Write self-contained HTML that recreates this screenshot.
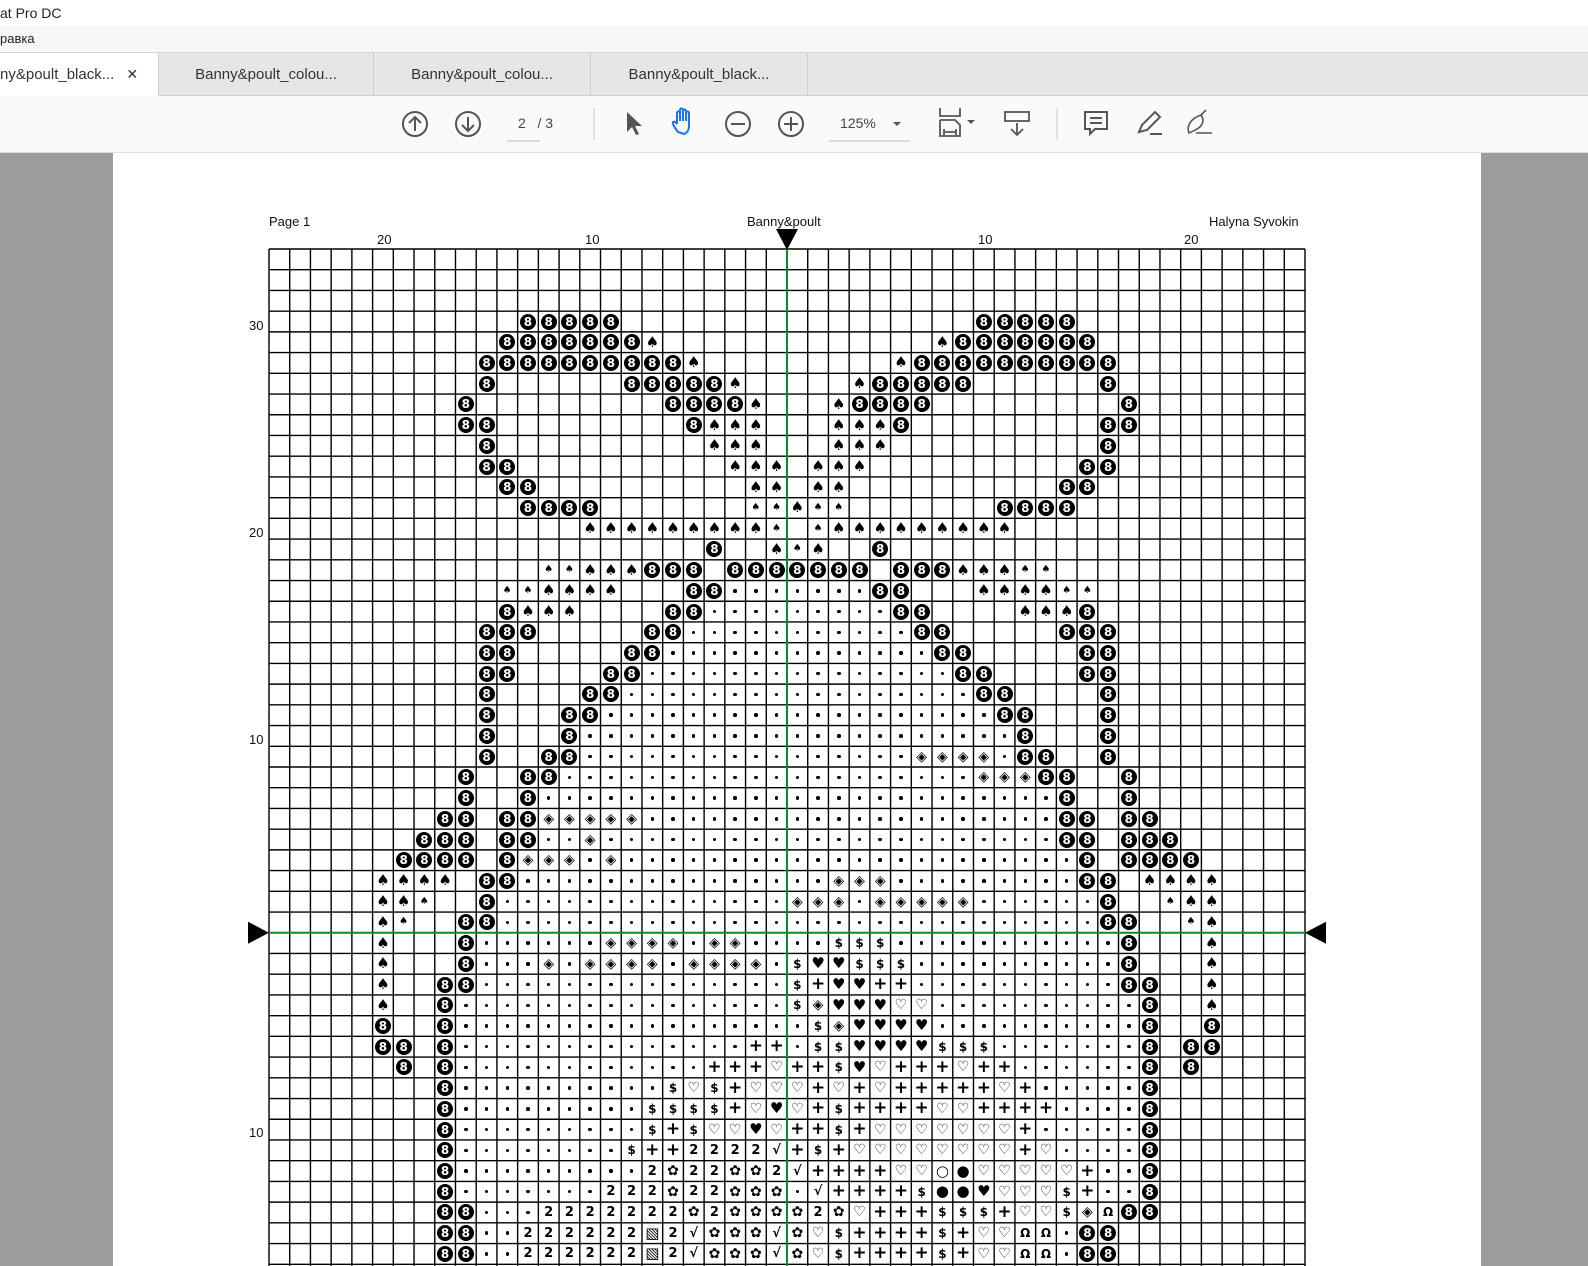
<!DOCTYPE html>
<html><head><meta charset="utf-8">
<style>
*{margin:0;padding:0;box-sizing:border-box}
body{width:1588px;height:1266px;overflow:hidden;background:#9c9c9c;font-family:"Liberation Sans",sans-serif;position:relative}
.abs{position:absolute}
#title{left:0;top:0;width:1588px;height:27px;background:#fff;font-size:14px;color:#222;padding:5px 0 0 0}
#menu{left:0;top:27px;width:1588px;height:25px;background:#f7f7f7;font-size:13px;color:#222;padding:4px 0 0 0}
#tabs{left:0;top:52px;width:1588px;height:44px;background:#e6e6e6;border-top:1px solid #d4d4d4;border-bottom:1px solid #d0d0d0}
.tab{position:absolute;top:0;height:43px;font-size:15px;color:#333;line-height:43px;border-right:1px solid #cfcfcf;text-align:center}
#tool{left:0;top:96px;width:1588px;height:57px;background:#fafafa;border-bottom:1px solid #ddd}
#page{left:113px;top:153px;width:1368px;height:1113px;background:#fff}
.c{position:absolute;width:20.7px;height:20.7px;display:flex;align-items:center;justify-content:center;color:#000;font-weight:bold;line-height:1}
.e{width:16px;height:16px;border-radius:50%;background:#000;color:#fff;font-size:12px;font-weight:bold;display:flex;align-items:center;justify-content:center;font-family:"DejaVu Sans",sans-serif}
.dt{width:3.5px;height:3.5px;background:#000;border-radius:50%}
.lbl{position:absolute;font-size:13px;color:#111}
</style></head><body>
<div id="title" class="abs">at Pro DC</div>
<div id="menu" class="abs">равка</div>
<div id="tabs" class="abs">
 <div class="tab" style="left:0;width:159px;background:#fff;text-align:left;padding-left:0">ny&amp;poult_black... <span style="margin-left:8px;font-size:14px">✕</span></div>
 <div class="tab" style="left:159px;width:215px">Banny&amp;poult_colou...</div>
 <div class="tab" style="left:374px;width:217px">Banny&amp;poult_colou...</div>
 <div class="tab" style="left:591px;width:217px">Banny&amp;poult_black...</div>
</div>
<div id="tool" class="abs">
<svg width="1588" height="57" style="position:absolute;left:0;top:0" fill="none" stroke="#555" stroke-width="2">
 <circle cx="415" cy="28" r="12"/><path d="M415 35V21M409 27l6-6 6 6"/>
 <circle cx="468" cy="28" r="12"/><path d="M468 21v14M462 29l6 6 6-6"/>
 <line x1="507" y1="45" x2="540" y2="45" stroke="#bbb" stroke-width="1"/>
 <line x1="594" y1="12" x2="594" y2="44" stroke="#ccc" stroke-width="1"/>
 <path d="M627 16l0 20 5-5 4 8 3-1-4-8 7 0z" fill="#555" stroke="none"/>
 <path d="M678 36c-3-4-6-8-5-10 1-1 3 0 4 2V17c0-2 3-2 3 0v8-11c0-2 3-2 3 0v11-10c0-2 3-2 3 0v10-8c0-2 3-2 3 0v13c0 4-2 7-5 8z" stroke="#1a73e8"/>
 <circle cx="738" cy="28" r="12"/><path d="M731 28h14"/>
 <circle cx="791" cy="28" r="12"/><path d="M784 28h14M791 21v14"/>
 <line x1="829" y1="45" x2="910" y2="45" stroke="#bbb" stroke-width="1"/>
 <path d="M893 26h8l-4 4z" fill="#555" stroke="none"/>
 <path d="M940 12v8h20v-8M940 24v16h20V29l-5-5h-15M944 36h12M944 33v6M956 33v6" stroke-width="1.8"/>
 <path d="M967 24h8l-4 4z" fill="#555" stroke="none"/>
 <rect x="1005" y="16" width="24" height="9" stroke-width="1.8"/><path d="M1017 27v12M1011 33l6 6 6-6" stroke-width="1.8"/>
 <line x1="1057" y1="12" x2="1057" y2="44" stroke="#ccc" stroke-width="1"/>
 <path d="M1085 16h22v17h-12l-5 5v-5h-5z M1090 22h12M1090 27h12"/>
 <path d="M1139 36l3-7 13-13 5 5-13 13zM1150 38h12" />
 <path d="M1189 37c-3-8 3-15 12-18 3 4 3 10-4 14-3 2-6 3-8 4zM1201 19l5-5M1196 37h16" stroke-width="1.6"/>
</svg>
<div class="abs" style="left:518px;top:19px;font-size:14px;color:#444">2 &nbsp; / 3</div>
<div class="abs" style="left:840px;top:19px;font-size:14px;color:#444">125%</div>
</div>
<div id="page" class="abs"></div>
<div class="lbl" style="left:269px;top:214px">Page 1</div>
<div class="lbl" style="left:747px;top:214px">Banny&amp;poult</div>
<div class="lbl" style="left:1209px;top:214px">Halyna Syvokin</div>
<div class="lbl" style="left:377px;top:232px">20</div>
<div class="lbl" style="left:585px;top:232px">10</div>
<div class="lbl" style="left:978px;top:232px">10</div>
<div class="lbl" style="left:1184px;top:232px">20</div>
<div class="lbl" style="left:249px;top:318px">30</div>
<div class="lbl" style="left:249px;top:525px">20</div>
<div class="lbl" style="left:249px;top:732px">10</div>
<div class="lbl" style="left:249px;top:1125px">10</div>
<svg id="g" class="abs" style="left:0;top:0" width="1588" height="1266"></svg>
<div id="cells"></div>
<script>
const X0=269,Y0=249,S=20.72,NC=50,NR=49;
let s='';
for(let i=0;i<=NC;i++){const x=X0+i*S;s+=`<line x1="${x}" y1="${Y0}" x2="${x}" y2="1266" stroke="#000" stroke-width="1.4"/>`}
for(let j=0;j<=NR;j++){const y=Y0+j*S;if(y>1266)break;s+=`<line x1="${X0}" y1="${y}" x2="${X0+NC*S}" y2="${y}" stroke="#000" stroke-width="1.4"/>`}
const cx=X0+25*S,cy=Y0+33*S;
s+=`<line x1="${cx}" y1="${Y0}" x2="${cx}" y2="1266" stroke="#0b8a2c" stroke-width="2"/>`;
s+=`<line x1="${X0}" y1="${cy}" x2="${X0+NC*S}" y2="${cy}" stroke="#0b8a2c" stroke-width="2"/>`;
s+=`<path d="M${cx-11} 229h22l-11 21z"/><path d="M248 ${cy-11}v22l21-11z"/><path d="M1326 ${cy-11}v22l-21-11z"/>`;
document.getElementById('g').innerHTML=s;
const D=n=>'.'.repeat(n);
const rows={
3:[[12,"88888"],[34,"88888"]],
4:[[11,"8888888S"],[32,"S8888888"]],
5:[[10,"8888888888S"],[30,"S8888888888"]],
6:[[10,"8"],[17,"88888S"],[28,"S88888"],[40,"8"]],
7:[[9,"8"],[19,"8888S"],[27,"S8888"],[41,"8"]],
8:[[9,"88"],[20,"8SSS"],[27,"SSS8"],[40,"88"]],
9:[[10,"8"],[21,"SSS"],[27,"SSS"],[40,"8"]],
10:[[10,"88"],[22,"SSS"],[26,"SSS"],[39,"88"]],
11:[[11,"88"],[23,"SS"],[26,"SS"],[38,"88"]],
12:[[12,"8888"],[23,"ddSdd"],[35,"8888"]],
13:[[15,"SSSSSSSSSd d"],[27,"SSSSSSSSS"]],
14:[[21,"8"],[24,"SdS"],[29,"8"]],
15:[[13,"ddSSS888 8888888 888SSSdd"]],
16:[[11,"ddSSSS"],[20,"88"+D(7)+"88"],[34,"SSSSdd"]],
17:[[11,"8SSS"],[19,"88"+D(9)+"88"],[36,"SSS8"]],
18:[[10,"888"],[18,"88"+D(11)+"88"],[38,"888"]],
19:[[10,"88"],[17,"88"+D(13)+"88"],[39,"88"]],
20:[[10,"88"],[16,"88"+D(15)+"88"],[39,"88"]],
21:[[10,"8"],[15,"88"+D(17)+"88"],[40,"8"]],
22:[[10,"8"],[14,"88"+D(19)+"88"],[40,"8"]],
23:[[10,"8"],[14,"8"+D(21)+"8"],[40,"8"]],
24:[[10,"8"],[13,"88"+D(16)+"oooo.88"],[40,"8"]],
25:[[9,"8"],[12,"88"+D(20)+"ooo88"],[41,"8"]],
26:[[9,"8"],[12,"8"+D(25)+"8"],[41,"8"]],
27:[[8,"88"],[11,"88ooooo"+D(20)+"88"],[41,"88"]],
28:[[7,"888"],[11,"88..o"+D(22)+"88"],[41,"888"]],
29:[[6,"8888"],[11,"8ooo.o"+D(22)+"8"],[41,"8888"]],
30:[[5,"SSSS"],[10,"88"+D(15)+"ooo"+D(9)+"88"],[42,"SSSS"]],
31:[[5,"SSd"],[10,"8"+D(14)+"ooo.ooooo"+D(6)+"8"],[43,"dSS"]],
32:[[5,"Sd"],[9,"88"+D(29)+"88"],[44,"dS"]],
33:[[5,"S"],[9,"8"+D(6)+"oooo.oo"+D(4)+"$$$"+D(11)+"8"],[45,"S"]],
34:[[5,"S"],[9,"8..."+"o.oooo.oooo."+"$hh$$$"+D(10)+"8"],[45,"S"]],
35:[[5,"S"],[8,"88"+D(15)+"$+hh++"+D(10)+"88"],[45,"S"]],
36:[[5,"S"],[8,"8"+D(16)+"$ohhhHH"+D(10)+"8"],[45,"S"]],
37:[[5,"8"],[8,"8"+D(17)+"$ohhhh"+D(10)+"8"],[45,"8"]],
38:[[5,"88"],[8,"8"+D(14)+"++."+"$$hhhh$$$"+D(7)+"8"],[44,"88"]],
39:[[6,"8"],[8,"8"+D(12)+"+++H++$hH+++H++"+D(6)+"8"],[44,"8"]],
40:[[8,"8"+D(10)+"$H$+HHH+H+H+++++H+"+D(5)+"8"]],
41:[[8,"8"+D(9)+"$$$$+HhH+$++++HH++++"+D(4)+"8"]],
42:[[8,"8"+D(9)+"$+$HHhH++$+HHHHHHH+"+D(5)+"8"]],
43:[[8,"8"+D(8)+"$++2222v+$+HHHHHHHH+H"+D(4)+"8"]],
44:[[8,"8"+D(9)+"2f22ff2v++++HHOBHHHHH+"+D(2)+"8"]],
45:[[8,"8"+D(7)+"222f22fff.v++++$BBhHHH$+"+D(2)+"8"]],
46:[[8,"88"+D(3)+"2222222f2ffff2fH+++$$$+HH$on"],[41,"88"]],
47:[[8,"88..222222x2vfffvfH$++++$+HHnn.88"]],
48:[[8,"88..222222x2vfffvfH$++++$+HHnn.88"]]
};
const map={S:['♠',15],d:['♠',10],o:['◈',14],'$':['$',12],h:['♥',15],H:['♡',14],'+':['+',17],'2':['2',13],f:['✿',14],v:['√',13],O:['○',15],B:['●',15],n:['Ω',12],x:['▧',15]};
let h='';
for(const r in rows){for(const [c0,str] of rows[r]){for(let k=0;k<str.length;k++){const ch=str[k];if(ch===' ')continue;
const x=X0+(c0+k)*S,y=Y0+r*S;let inner;
if(ch==='8')inner='<div class="e">8</div>';else if(ch==='.')inner='<div class="dt"></div>';
else{const m=map[ch];inner=`<span style="font-size:${m[1]}px;font-family:'DejaVu Sans',sans-serif">${m[0]}</span>`}
h+=`<div class="c" style="left:${x}px;top:${y}px">${inner}</div>`}}}
document.getElementById('cells').innerHTML=h;
</script>
</body></html>
